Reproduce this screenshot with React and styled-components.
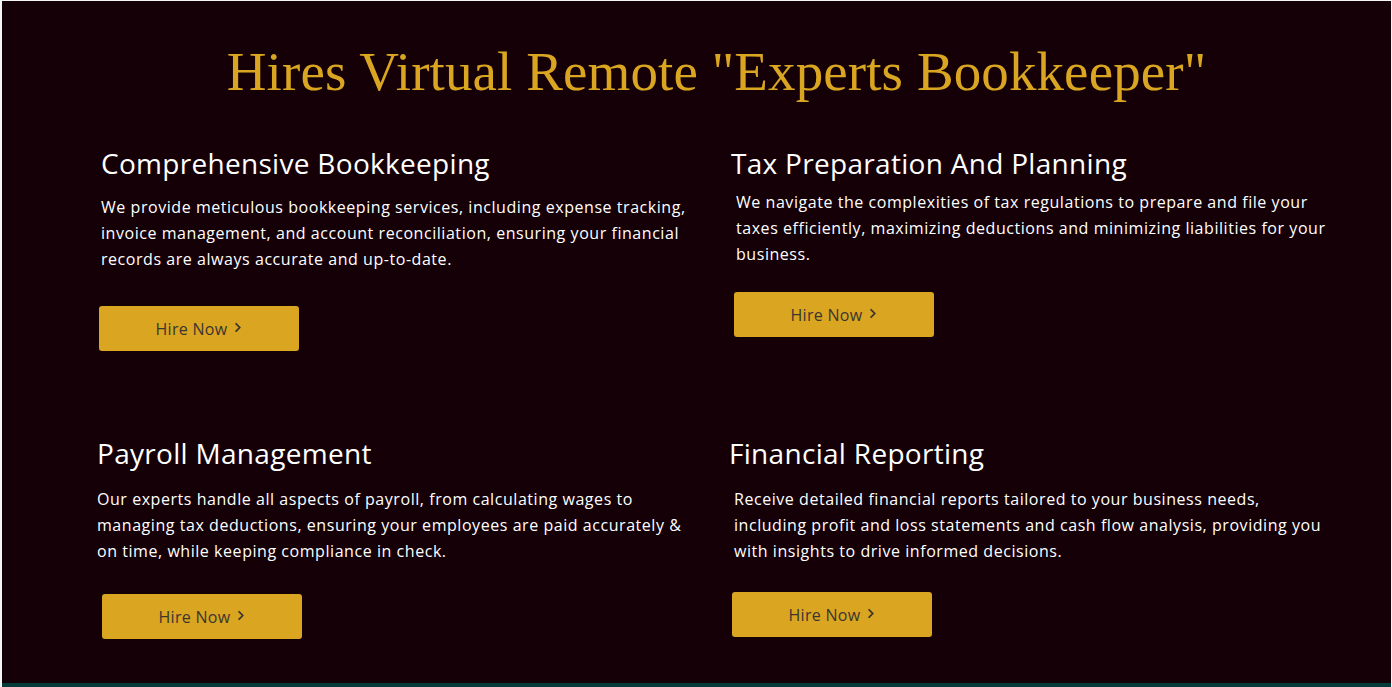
import * as React from "react"
import styled, { createGlobalStyle } from "styled-components"
import { FaChevronRight } from "react-icons/fa"

const colors = {
  bg: "#140006",
  gold: "#daa520",
  white: "#ffffff",
  teal: "#063b39",
  btnText: "#3b3530",
}

const services = [
  {
    title: "Comprehensive Bookkeeping",
    lines: [
      "We provide meticulous bookkeeping services, including expense tracking,",
      "invoice management, and account reconciliation, ensuring your financial",
      "records are always accurate and up-to-date.",
    ],
    shift: 4,
    textShift: 0,
    textTop: 12,
    btnTop: 34,
    btnShift: 2,
  },
  {
    title: "Tax Preparation And Planning",
    lines: [
      "We navigate the complexities of tax regulations to prepare and file your",
      "taxes efficiently, maximizing deductions and minimizing liabilities for your",
      "business.",
    ],
    shift: 2,
    textShift: 5,
    textTop: 7,
    btnTop: 25,
    btnShift: 5,
  },
  {
    title: "Payroll Management",
    lines: [
      "Our experts handle all aspects of payroll, from calculating wages to",
      "managing tax deductions, ensuring your employees are paid accurately &",
      "on time, while keeping compliance in check.",
    ],
    shift: 0,
    textShift: 0,
    textTop: 14,
    btnTop: 30,
    btnShift: 5,
  },
  {
    title: "Financial Reporting",
    lines: [
      "Receive detailed financial reports tailored to your business needs,",
      "including profit and loss statements and cash flow analysis, providing you",
      "with insights to drive informed decisions.",
    ],
    shift: 0,
    textShift: 5,
    textTop: 14,
    btnTop: 28,
    btnShift: 3,
  },
]

const GlobalStyle = createGlobalStyle`
  html, body {
    margin: 0;
    padding: 0;
    background: #f4f4f4;
  }
  * {
    box-sizing: border-box;
  }
`

const Page = styled.div`
  display: flex;
  flex-direction: column;
  height: 687px;
  padding: 1px 1px 0 2px;
`

const Section = styled.section`
  flex: 1;
  min-height: 0;
  overflow: hidden;
  background: ${colors.bg};
  padding: 39px 0 0 95px;
`

const Title = styled.h1`
  margin: 0 0 40px;
  padding-right: 55px;
  text-align: center;
  color: ${colors.gold};
  font-family: "Liberation Serif", "DejaVu Serif", serif;
  font-weight: 400;
  font-size: 55px;
  line-height: 64px;
  letter-spacing: 0.1px;
`

const Grid = styled.div`
  display: grid;
  grid-template-columns: 632px 632px;
  grid-auto-rows: 290px;
`

const Card = styled.div`
  display: flex;
  flex-direction: column;
  align-items: flex-start;
  padding-left: ${(p) => p.$shift}px;
`

const Heading = styled.h3`
  margin: 0;
  color: ${colors.white};
  font-family: "Open Sans", "DejaVu Sans", sans-serif;
  font-weight: 500;
  font-size: 28px;
  line-height: 38px;
  letter-spacing: 0.3px;
`

const Text = styled.p`
  margin: ${(p) => p.$top}px 0 0 ${(p) => p.$shift}px;
  color: ${colors.white};
  font-family: "Open Sans", "DejaVu Sans", sans-serif;
  font-size: 16px;
  line-height: 26px;
  letter-spacing: 0.55px;
  white-space: nowrap;
`

const Button = styled.button`
  display: flex;
  align-items: center;
  justify-content: center;
  gap: 5px;
  width: 200px;
  height: 45px;
  margin: ${(p) => p.$top}px 0 0 ${(p) => p.$shift}px;
  border: none;
  border-radius: 3px;
  background: ${colors.gold};
  color: ${colors.btnText};
  font-family: "Open Sans", "DejaVu Sans", sans-serif;
  font-size: 16px;
  letter-spacing: 0.3px;
  cursor: pointer;

  svg {
    width: 10px;
    height: 11px;
    margin-top: -3px;
  }
`

const FooterStrip = styled.div`
  flex: none;
  height: 4px;
  background: ${colors.teal};
`

const App = () => {
  return (
    <>
      <GlobalStyle />
      <Page>
        <Section>
          <Title>Hires Virtual Remote "Experts Bookkeeper"</Title>
          <Grid>
            {services.map((item, index) => (
              <Card key={index} $shift={item.shift}>
                <Heading>{item.title}</Heading>
                <Text $top={item.textTop} $shift={item.textShift}>
                  {item.lines.map((line, i) => (
                    <React.Fragment key={i}>
                      {line}
                      {i < item.lines.length - 1 && <br />}
                    </React.Fragment>
                  ))}
                </Text>
                <Button $top={item.btnTop} $shift={item.btnShift - item.shift}>
                  Hire Now <FaChevronRight />
                </Button>
              </Card>
            ))}
          </Grid>
        </Section>
        <FooterStrip />
      </Page>
    </>
  )
}

export default App
